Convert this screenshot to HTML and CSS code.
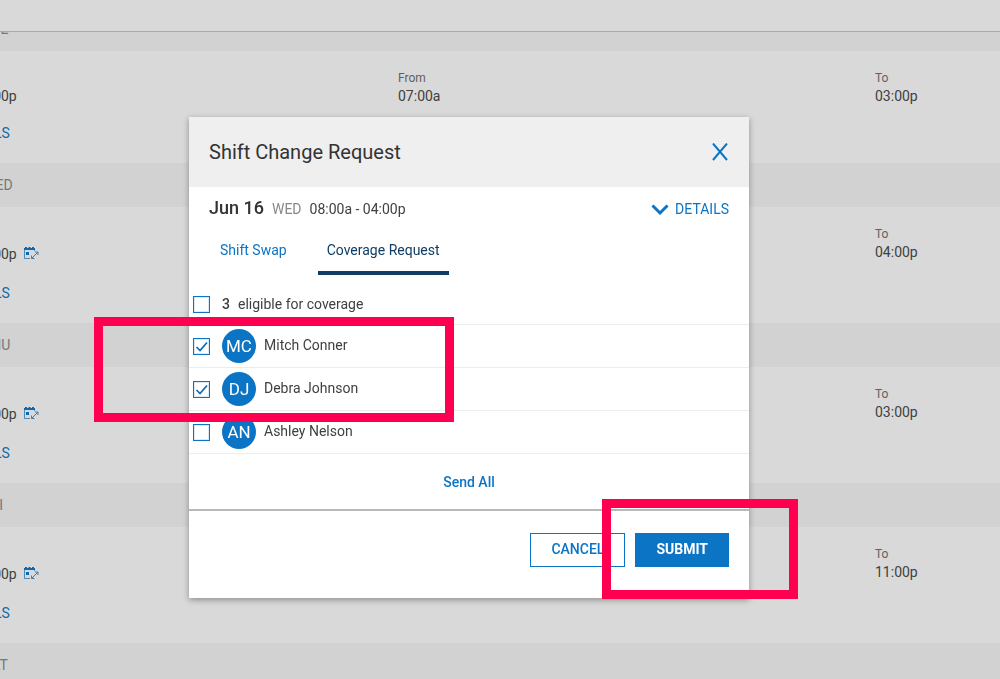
FILE: index.html
```
<!DOCTYPE html>
<html lang="en">
<head>
    <meta charset="UTF-8">
    <title>Shift Change Request</title>
    <link rel="stylesheet" href="styles.css">
</head>
<body>
    <svg class="sprite" width="0" height="0">
        <symbol id="swap-icon" viewBox="0 0 15 13">
            <path d="M0 1h1V0h2v1h1.500V0h2v1H8V0h2v1h1v2H0z" fill="currentColor"/>
            <path d="M.5 3v8.500H6M10.500 3v1" fill="none" stroke="currentColor" opacity=".7"/>
            <path d="M2 5h3v3H2z" fill="currentColor"/>
            <path d="M8 11L13.500 5.500M11 5H14V8M7.500 8.500V11.500H10.500" fill="none" stroke="currentColor" opacity=".8"/>
        </symbol>
    </svg>

    <div class="topbar"></div>
    <div class="schedule">
        <div class="day">TUE</div>
        <div class="shift">
            <div class="shift-main">
                <div class="time">03:00p</div>
                <a class="details" href="#">DETAILS</a>
            </div>
            <div class="shift-col">
                <div class="label">From</div>
                <div>07:00a</div>
            </div>
            <div class="shift-col">
                <div class="label">To</div>
                <div>03:00p</div>
            </div>
        </div>
        <div class="day">WED</div>
        <div class="shift">
            <div class="shift-main">
                <div class="time swap">04:00p <svg class="swap-icon"><use href="#swap-icon"/></svg></div>
                <a class="details" href="#">DETAILS</a>
            </div>
            <div class="shift-col"></div>
            <div class="shift-col">
                <div class="label">To</div>
                <div>04:00p</div>
            </div>
        </div>
        <div class="day">THU</div>
        <div class="shift">
            <div class="shift-main">
                <div class="time swap">03:00p <svg class="swap-icon"><use href="#swap-icon"/></svg></div>
                <a class="details" href="#">DETAILS</a>
            </div>
            <div class="shift-col"></div>
            <div class="shift-col">
                <div class="label">To</div>
                <div>03:00p</div>
            </div>
        </div>
        <div class="day">FRI</div>
        <div class="shift">
            <div class="shift-main">
                <div class="time swap">11:00p <svg class="swap-icon"><use href="#swap-icon"/></svg></div>
                <a class="details" href="#">DETAILS</a>
            </div>
            <div class="shift-col"></div>
            <div class="shift-col">
                <div class="label">To</div>
                <div>11:00p</div>
            </div>
        </div>
        <div class="day">SAT</div>
    </div>

    <div class="overlay">
        <div class="modal">
            <div class="modal-header">
                <h1>Shift Change Request</h1>
                <button class="close" aria-label="Close">
                    <svg width="18" height="18" viewBox="0 0 18 18"><path d="M2 .5L16 17M16 .5L2 17" fill="none" stroke="currentColor" stroke-width="2"/></svg>
                </button>
            </div>
            <div class="summary">
                <span class="date">Jun 16</span>
                <span class="weekday">WED</span>
                <span>08:00a - 04:00p</span>
                <a class="summary-link" href="#">
                    <svg width="18" height="12" viewBox="0 0 18 12"><path d="M1.500 1.500L9 9L16.500 1.500" fill="none" stroke="currentColor" stroke-width="3"/></svg>
                    DETAILS
                </a>
            </div>
            <div class="tabs">
                <button class="tab">Shift Swap</button>
                <button class="tab active">Coverage Request</button>
            </div>
            <div class="people">
                <label class="person all"><input type="checkbox"><b>3</b> <span>eligible for coverage</span></label>
                <label class="person"><input type="checkbox" checked><span class="avatar">MC</span><span class="name">Mitch Conner</span></label>
                <label class="person"><input type="checkbox" checked><span class="avatar">DJ</span><span class="name">Debra Johnson</span></label>
                <label class="person"><input type="checkbox"><span class="avatar">AN</span><span class="name">Ashley Nelson</span></label>
            </div>
            <button class="send-all">Send All</button>
            <div class="modal-footer">
                <button class="btn">CANCEL</button>
                <button class="btn primary">SUBMIT</button>
            </div>
            <div class="highlight highlight-people"></div>
            <div class="highlight highlight-submit"></div>
        </div>
    </div>
</body>
</html>
```
FILE: styles.css
```
* {
    box-sizing: border-box;
}
body {
    margin: 0;
    height: 100vh;
    overflow: hidden;
    background-color: #d9d9d9;
    color: #404040;
    font-family: Roboto, Arial, sans-serif;
    font-size: 14px;
    line-height: 20px;
}
a {
    color: #0d69ab;
    text-decoration: none;
}
button {
    padding: 0;
    border: 0;
    background: none;
    color: #0b74c4;
    font: inherit;
    cursor: pointer;
}
.sprite {
    position: absolute;
}
.topbar {
    position: relative;
    z-index: 1;
    height: 32px;
    background-color: #d9d9d9;
    border-bottom: 1px solid #a9a9a9;
}

/* the schedule is scrolled down and to the right */
.schedule {
    margin: -25px -352px 0 -79px;
}
.day {
    height: 44px;
    padding-left: 62px;
    background-color: #d2d2d2;
    color: #777;
    line-height: 44px;
}
.shift {
    display: grid;
    grid-template-columns: 1fr 1fr 1fr;
    padding: 17px 0 20px;
}
.shift-main {
    padding: 18px 0 0 35px;
}
.label {
    padding-top: 2px;
    color: #606060;
    font-size: 12px;
    line-height: 16px;
}
.time {
    display: flex;
    align-items: center;
    padding-left: 18px;
}
.swap {
    height: 24px;
}
.swap-icon {
    width: 15px;
    height: 13px;
    margin: 0 0 2px 7px;
    color: #0d69ab;
}
.details {
    display: block;
    margin-top: 17px;
}

.overlay {
    position: fixed;
    top: 0;
    left: 0;
    right: 62px;
    bottom: 0;
    padding-top: 117px;
}
.modal {
    position: relative;
    width: 560px;
    margin: 0 auto;
    background-color: #fff;
    box-shadow: 0 2px 6px rgba(0, 0, 0, 0.35);
}
.modal-header {
    display: flex;
    align-items: center;
    justify-content: space-between;
    height: 70px;
    padding: 0 20px;
    background-color: #efefef;
}
.modal-header h1 {
    margin: 0;
    color: #333;
    font-size: 20px;
    font-weight: 400;
}
.close svg {
    display: block;
}
.summary {
    display: flex;
    align-items: baseline;
    gap: 8px;
    padding: 11px 20px 0;
}
.date {
    color: #333;
    font-size: 18px;
    font-weight: 500;
}
.weekday {
    color: #888;
}
.summary-link {
    margin-left: auto;
    color: #0b74c4;
}
.summary-link svg {
    margin-right: 3px;
    vertical-align: -2px;
}
.tabs {
    display: flex;
    gap: 22px;
    padding: 10px 22px 0;
}
.tab {
    height: 46px;
    padding: 0 9px;
    border-bottom: 4px solid transparent;
}
.tab.active {
    border-color: #0f3d63;
    color: #0f3d63;
}
.people {
    padding-top: 9px;
}
.person {
    display: flex;
    align-items: center;
    height: 43px;
    padding-left: 4px;
    border-bottom: 1px solid #ececec;
}
.person.all {
    height: 41px;
}
.person b {
    margin-right: 8px;
    font-weight: 500;
}
.person input {
    appearance: none;
    width: 17px;
    height: 17px;
    margin: 0 12px 0 0;
    border: 1px solid #0b74c4;
    background-color: #fff;
    box-shadow: inset 0 0 0 1px #dceaf5;
}
.person input:checked {
    background-image: url("data:image/svg+xml,%3Csvg xmlns='http://www.w3.org/2000/svg' viewBox='0 0 15 15'%3E%3Cpath d='M2.500 8L6 11.500L13 3.500' fill='none' stroke='%230b6bb8' stroke-width='1.7'/%3E%3C/svg%3E");
}
.avatar {
    width: 34px;
    height: 34px;
    margin-right: 8px;
    border-radius: 50%;
    background-color: #0b74c4;
    color: #fff;
    font-size: 17px;
    line-height: 34px;
    text-align: center;
}
.name {
    padding-bottom: 2px;
}
.send-all {
    display: block;
    width: 100%;
    height: 55px;
    font-weight: 500;
}
.modal-footer {
    display: flex;
    justify-content: flex-end;
    gap: 10px;
    padding: 22px 20px 31px;
    border-top: 2px solid #b9b9b9;
}
.btn {
    height: 34px;
    padding: 0 20px 2px;
    border: 1px solid #0b74c4;
    background-color: #fff;
    font-weight: 500;
}
.btn.primary {
    background-color: #0b74c4;
    color: #fff;
    font-weight: 700;
}

.highlight {
    position: absolute;
    border: 9px solid #ff0050;
    pointer-events: none;
}
.highlight-people {
    top: 200px;
    left: -95px;
    width: 360px;
    height: 105px;
}
.highlight-submit {
    top: 382px;
    left: 413px;
    width: 196px;
    height: 100px;
}
```
